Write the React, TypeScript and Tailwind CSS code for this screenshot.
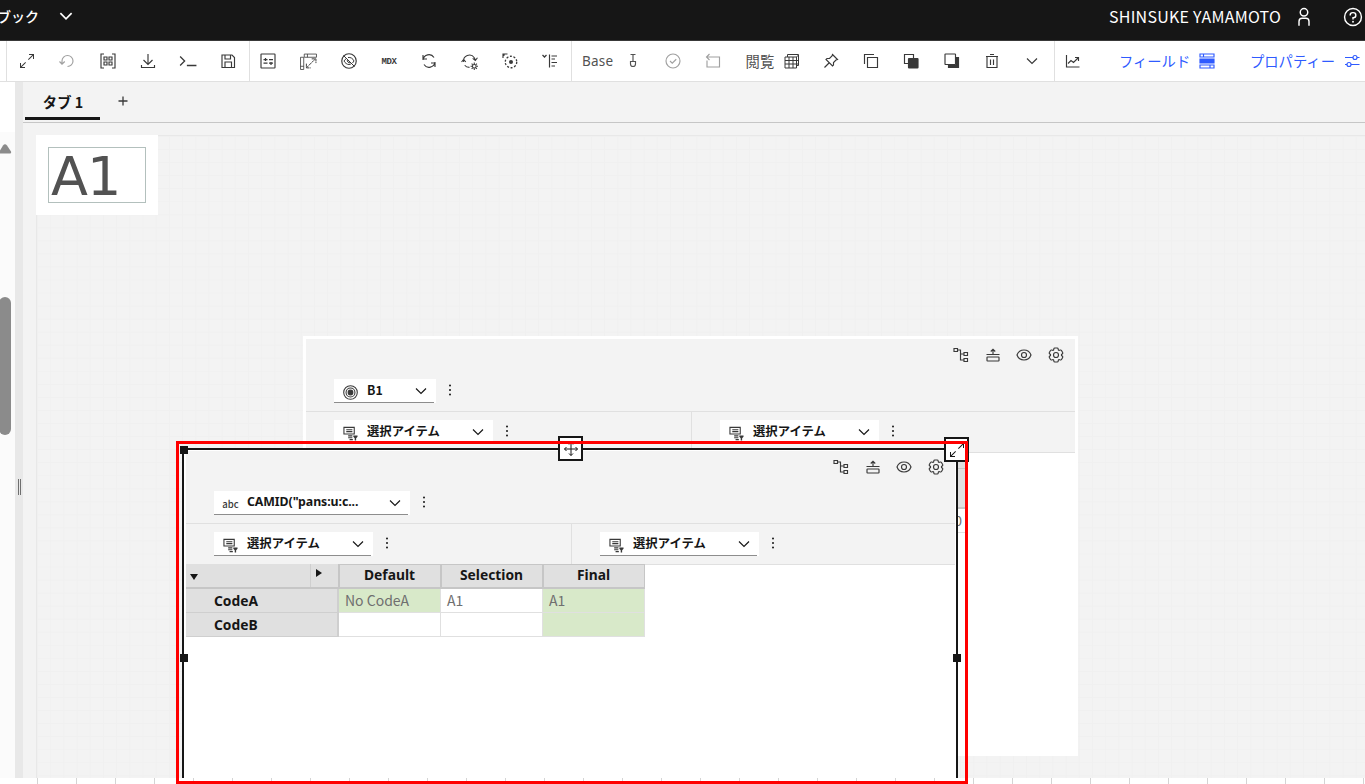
import type { ReactNode } from 'react';
import clsx from 'clsx';

type IconProps = { children: ReactNode; className?: string; size?: number };

function Icon({ children, className, size = 16 }: IconProps) {
  return (
    <svg
      width={size}
      height={size}
      viewBox="0 0 32 32"
      fill="none"
      stroke="currentColor"
      strokeWidth={2.3}
      className={clsx('shrink-0', className)}
    >
      {children}
    </svg>
  );
}

const ChevronDown = ({ className, size = 16 }: { className?: string; size?: number }) => (
  <Icon size={size} className={className}>
    <path d="M6 11l10 10 10-10" strokeWidth="2.300" />
  </Icon>
);

const Maximize = ({ className }: { className?: string }) => (
  <Icon className={className}>
    <path
      fill="currentColor"
      stroke="none"
      d="M20 2v2h6.586L18 12.582 19.414 14 28 5.414V12h2V2zM14 19.416L12.592 18 4 26.586V20H2v10h10v-2H5.414z"
    />
  </Icon>
);

const Dots = () => (
  <Icon className="text-[#161616]">
    <g fill="currentColor" stroke="none">
      <circle cx="16" cy="7" r="2" />
      <circle cx="16" cy="16" r="2" />
      <circle cx="16" cy="25" r="2" />
    </g>
  </Icon>
);

const Hierarchy = () => (
  <Icon>
    <path d="M2 3h7v6H2zM9 6h6v20h7M15 14h7M22 11h7v6h-7zM22 23h7v6h-7z" />
  </Icon>
);

const PushUp = () => (
  <Icon>
    <path d="M3 15h26M16 15V5M11.500 9L16 4.500 20.500 9M5 20h22a1 1 0 0 1 1 1v6a1 1 0 0 1-1 1H5a1 1 0 0 1-1-1v-6a1 1 0 0 1 1-1z" />
  </Icon>
);

const Eye = () => (
  <Icon>
    <path d="M2 16C4.100 10.400 10 6 16 6s11.900 4.400 14 10c-2.100 5.600-8 10-14 10S4.100 21.600 2 16z" />
    <circle cx="16" cy="16" r="5" />
  </Icon>
);

const Gear = () => (
  <Icon>
    <path d="M27 16.760v-1.530l1.920-1.680A2 2 0 0 0 29.300 11L26.940 7a2 2 0 0 0-2.370-.9l-2.430.82a11.350 11.350 0 0 0-1.310-.75l-.51-2.520a2 2 0 0 0-2-1.610h-4.680a2 2 0 0 0-2 1.610l-.51 2.520a11.480 11.480 0 0 0-1.320.75L7.430 6.060A2 2 0 0 0 5.060 7L2.700 11a2 2 0 0 0 .41 2.510L5 15.240v1.530l-1.890 1.680A2 2 0 0 0 2.700 21l2.360 4a2 2 0 0 0 2.370.9l2.430-.82a11.350 11.350 0 0 0 1.310.75l.51 2.520a2 2 0 0 0 2 1.610h4.720a2 2 0 0 0 2-1.610l.51-2.520a11.480 11.480 0 0 0 1.320-.75l2.420.82a2 2 0 0 0 2.370-.9l2.280-4a2 2 0 0 0-.41-2.510z" />
    <circle cx="16" cy="16" r="5" />
  </Icon>
);

const SetIcon = () => (
  <Icon size={15}>
    <path d="M2 3h22v14H2zM7 8h13M7 12h13M11 21h9M11 25h9M14 29h7" />
    <path fill="currentColor" stroke="none" d="M22 20h9v3l-3 3v5h-3v-5l-3-3z" />
  </Icon>
);

const Target = () => (
  <Icon size={15}>
    <circle cx="16" cy="16" r="14.500" />
    <circle cx="16" cy="16" r="9.500" />
    <circle cx="16" cy="16" r="5" fill="currentColor" />
  </Icon>
);

const fileTools: { icon: ReactNode; muted?: boolean }[] = [
  { icon: <Maximize /> },
  {
    muted: true,
    icon: (
      <Icon>
        <path d="M17 27a11 11 0 1 0-11-11v5M1 17l5 5.500 5.500-5.500" />
      </Icon>
    ),
  },
  {
    icon: (
      <Icon>
        <path d="M8 2H2v28h6M24 2h6v28h-6M8 8h6v6H8zM18 8h6v6h-6zM8 18h6v6H8zM18 18h6v6h-6z" />
      </Icon>
    ),
  },
  {
    icon: (
      <Icon>
        <path d="M16 2v21M7 14l9 9 9-9M3 24v5h26v-5" />
      </Icon>
    ),
  },
  {
    icon: (
      <Icon size={18}>
        <path d="M2 8l8 8-8 8M14 24h17" />
      </Icon>
    ),
  },
  {
    icon: (
      <Icon className="-ml-px">
        <path d="M4 4h20l5 5v20H4zM10 4v8h11V4M10 28V18h13v10" />
      </Icon>
    ),
  },
];

const viewTools: ReactNode[] = [
  <Icon>
    <rect x="2" y="2" width="28" height="28" rx="1" />
    <path strokeWidth="2.500" d="M7 13h8M11 10v6M7 20h8M18 13h8M18 20h8M22 18v6" />
  </Icon>,
  <Icon size={17}>
    <path d="M8 2h23v6H8zM1 8h6v23H1zM14 2v6M1 25h6" strokeWidth="1.500" />
    <path d="M12 28L29 11M22 11h8v8M12 20v8h8" strokeWidth="1.800" strokeDasharray="6 1" />
  </Icon>,
  <Icon>
    <circle cx="16" cy="16" r="14.500" />
    <path d="M5 5l22 22M11 11c-2 1-4 3-5 5 2 4 6 7 10 7 2 0 4-1 5-2M14 9c5-1 10 2 12 7l-3 4M13 13a4.500 4.500 0 0 0 6 6" strokeWidth="2" />
  </Icon>,
  <span className="pt-[3px] font-['Liberation_Mono'] text-[9px] font-bold tracking-[-0.3px]">MDX</span>,
  <Icon>
    <path d="M4 14a12 12 0 0 1 22-5M28 18a12 12 0 0 1-22 5M4 4v8h8M28 28v-8h-8" />
  </Icon>,
  <Icon size={17}>
    <path d="M5 17A11 11 0 0 1 25 9l2 4M7 23c2 3 5 4 9 4M1 17l4-5 4 5M22 10l5 4 4-5" strokeWidth="2" />
    <circle cx="25" cy="25" r="3.500" strokeWidth="2" />
    <path d="M25 18v3M25 29v3M18 25h3M29 25h3M20 20l2 2M28 28l2 2M20 30l2-2M28 22l2-2" strokeWidth="2" />
  </Icon>,
  <Icon>
    <path d="M2 10V2h9M2 2l3 3" />
    <circle cx="18" cy="18" r="11.500" strokeWidth="2.600" strokeDasharray="4 3.220" />
    <circle cx="18" cy="18" r="4" fill="currentColor" stroke="none" />
  </Icon>,
  <Icon>
    <path d="M1 4l4 4 4-4" strokeWidth="2.500" />
    <path d="M15 3v26M19 6h11M19 12h7M19 19h11M19 26h7" />
  </Icon>,
];

const arrangeTools: ReactNode[] = [
  <Icon>
    <path d="M19 3l10 10-3 1-5 5v5l-2 2L6 13l2-2h5l5-5zM12 20l-9 9" />
  </Icon>,
  <Icon>
    <path d="M9 9h20v20H9zM3 22V3h19" />
  </Icon>,
  <Icon>
    <path d="M11 21H3V3h18v8" />
    <rect x="11" y="11" width="19" height="19" rx="1" fill="currentColor" />
  </Icon>,
  <Icon>
    <path d="M24 9h5v20H9v-5h15z" fill="currentColor" />
    <rect x="2" y="2" width="21" height="21" rx="1" fill="white" />
  </Icon>,
  <Icon>
    <path d="M4 7h24M6 7v22h20V7M12 3h8M13 13v11M19 13v11" />
  </Icon>,
  <ChevronDown />,
];

function ToolButton({ children, muted }: { children: ReactNode; muted?: boolean }) {
  return (
    <button className={clsx('flex h-full w-[40.3px] shrink-0 items-center justify-center', muted && 'text-[#a0a0a0]')}>
      {children}
    </button>
  );
}

function Header() {
  return (
    <header className="flex h-[41px] items-start border-b border-[#393939] bg-[#161616] text-white">
      <div className="flex h-8 w-[39px] items-center justify-end text-[14px] font-medium whitespace-nowrap">ブック</div>
      <ChevronDown size={18} className="mt-[7px] ml-[18px] [&>path]:stroke-[3]" />
      <div className="ml-auto flex h-[33px] items-center">
        <span className="w-[172px] pb-[2px] text-[16px] tracking-[0.24px] whitespace-nowrap">SHINSUKE YAMAMOTO</span>
        <Icon size={20} className="ml-[13px]">
          <path d="M8 30v-7a5 5 0 0 1 5-5h6a5 5 0 0 1 5 5v7" />
          <circle cx="16" cy="8.500" r="6" />
        </Icon>
        <Icon size={20} className="mr-[2px] ml-[29px]">
          <circle cx="16" cy="16" r="13.500" />
          <path d="M11.500 13.500V13a4 4 0 0 1 4-4h1a4 4 0 0 1 0 8H16v3" />
          <circle cx="16" cy="23.500" r="1.500" fill="currentColor" stroke="none" />
        </Icon>
      </div>
    </header>
  );
}

function Toolbar() {
  return (
    <div className="flex h-[41px] items-center border-b border-[#e0e0e0] bg-white text-[14px] text-[#393939]">
      <div className="ml-[6px] flex h-full w-[244px] border-x border-[#e0e0e0]">
        {fileTools.map((t, i) => (
          <ToolButton key={i} muted={t.muted}>{t.icon}</ToolButton>
        ))}
      </div>
      <div className="flex h-full w-[322px] border-r border-[#e0e0e0]">
        <div className="-ml-[2px] flex">
          {viewTools.map((icon, i) => (
            <ToolButton key={i}>{icon}</ToolButton>
          ))}
        </div>
      </div>
      <div className="flex h-full items-center text-[#525252]">
        <span className="ml-[10px] w-[32px] font-['Noto_Sans'] text-[13.500px] tracking-[0.25px]">Base</span>
        <Icon className="ml-[11px]">
          <path d="M11 3h10M16 3v14M11 17h10v5a5 5 0 0 1-10 0z" />
        </Icon>
        <div className="ml-[12px] flex h-full text-[#a0a0a0]">
          <ToolButton>
            <Icon>
              <circle cx="16" cy="16" r="14" />
              <path d="M10 16l4.500 4.500 8-8" />
            </Icon>
          </ToolButton>
          <ToolButton>
            <Icon>
              <path d="M4 15v13h25V8H4M9 2L3 8l6 6" />
            </Icon>
          </ToolButton>
        </div>
        <span className="ml-[12px] w-[29px] text-[14.300px] whitespace-nowrap">閲覧</span>
        <Icon className="ml-[9px] text-[#393939]">
          <path d="M2 8h23v22H2zM7 8V3h22v22h-4M2 15h27M2 22h27M10 8v22M18 8v22M25 8l4-4" strokeWidth="2" />
        </Icon>
      </div>
      <div className="ml-[11px] flex h-full w-[244px] border-r border-[#e0e0e0]">
        {arrangeTools.map((icon, i) => (
          <ToolButton key={i}>{icon}</ToolButton>
        ))}
      </div>
      <Icon className="ml-[10px]">
        <path d="M3 4v24h26M6 21l6-6 5 4 9-9M20 9h7v7" />
      </Icon>
      <div className="ml-auto flex items-center text-[#2f5bff]">
        <span className="w-[72px] text-[14.300px] whitespace-nowrap">フィールド</span>
        <Icon className="ml-[8px]">
          <path d="M2 2h28v6H2zM2 24h28v6H2zM9 2v6M22 24v6" />
          <path d="M2 12h28v8H2z" fill="currentColor" />
        </Icon>
        <span className="ml-[35px] w-[85px] text-[14.300px] whitespace-nowrap">プロパティー</span>
        <Icon className="mr-[5px] ml-[9px]">
          <path d="M2 9h16M26 9h5M2 23h4M14 23h17" />
          <circle cx="22" cy="9" r="4" />
          <circle cx="10" cy="23" r="4" />
        </Icon>
      </div>
    </div>
  );
}

function SidePanel() {
  return (
    <aside className="flex w-[23px] shrink-0">
      <div className="w-[15px] bg-[#fbfbfb]">
        <div className="h-[50px] bg-white" />
        <svg width="12" height="10" viewBox="0 0 12 10" className="mt-[12px]">
          <path d="M0 6.500L3 1.500Q5 -1 7 1.500L11 7.500Q11.500 9.500 10 9.500H0z" fill="#8b8b8b" />
        </svg>
        <div className="mt-[143px] -ml-px h-[138px] w-[12px] rounded-[6px] bg-[#8b8b8b]" />
      </div>
      <div className="flex w-[8px] items-center justify-center gap-px bg-[#e8e8e8] pt-[114px]">
        <div className="h-[16px] w-px bg-[#6f6f6f]" />
        <div className="h-[16px] w-px bg-[#6f6f6f]" />
      </div>
    </aside>
  );
}

function TabBar() {
  return (
    <div className="flex h-[41px] items-start border-b border-[#c6c6c6] pl-[2px]">
      <div className="flex h-[38px] w-[75px] items-center justify-center border-b-[3px] border-[#161616] pt-[4px] pl-px text-[14.300px] font-bold text-[#161616]">
        タブ 1
      </div>
      <Icon size={18} className="mt-[10px] ml-[14px] text-[#393939]">
        <path d="M16 8v16M8 16h16" />
      </Icon>
    </div>
  );
}

function DimSelect({ icon, label, width, latin }: { icon: ReactNode; label: string; width: string; latin?: boolean }) {
  return (
    <div className="flex items-center">
      <div className={clsx('flex h-[24px] flex-col bg-white', width)}>
        <div className="flex h-[23px] items-center pr-[7px] pl-[9px]">
          <span className="mt-[3px] flex w-[15px] justify-center text-[#393939]">{icon}</span>
          <span
            className={clsx(
              'ml-[9px] text-[12.350px] font-bold whitespace-nowrap text-[#161616]',
              latin ? "font-['Noto_Sans',sans-serif] tracking-[-0.08px]" : 'pb-px',
            )}
          >
            {label}
          </span>
          <ChevronDown className="ml-auto text-[#161616]" />
        </div>
        <div className="mr-[2px] h-px bg-[#8d8d8d]" />
      </div>
      <span className="mb-[2px] ml-[6px]">
        <Dots />
      </span>
    </div>
  );
}

function WidgetHeader({ top }: { top: ReactNode }) {
  return (
    <div className="bg-[#f3f3f3]">
      <div className="h-[73px] border-b border-[#e0e0e0]">
        <div className="flex h-[34px] items-center justify-end gap-[15.700px] pr-[11px] pb-[2px] text-[#393939]">
          <Hierarchy />
          <PushUp />
          <Eye />
          <Gear />
        </div>
        <div className="mt-[6px] ml-[28px]">{top}</div>
      </div>
      <div className="grid h-[41px] grid-cols-[386px_1fr] border-b border-[#e0e0e0]">
        <div className="border-r border-[#e0e0e0] pt-[8px] pl-[28px]">
          <DimSelect icon={<SetIcon />} label="選択アイテム" width="w-[159px]" />
        </div>
        <div className="pt-[8px] pl-[28px]">
          <DimSelect icon={<SetIcon />} label="選択アイテム" width="w-[159px]" />
        </div>
      </div>
    </div>
  );
}

const cols = ['Default', 'Selection', 'Final'];
const rows = [
  { name: 'CodeA', cells: ['No CodeA', 'A1', 'A1'], green: [true, false, true] },
  { name: 'CodeB', cells: ['', '', ''], green: [false, false, true] },
];

function DataGrid() {
  return (
    <div className="w-[459px] text-[14px]">
      <div className="flex h-[25px] border-b-2 border-[#c6c6c6] bg-[#e0e0e0] font-bold text-[#161616]">
        <div className="flex w-[124px] items-center pt-[3px] pl-[4px]">
          <svg width="8" height="6" viewBox="0 0 8 6">
            <path d="M0 0h8L4 6z" fill="#161616" />
          </svg>
        </div>
        <div className="w-[28px] border-l border-[#cfcfcf] pt-[5px] pl-[5px]">
          <svg width="6" height="8" viewBox="0 0 6 8">
            <path d="M0 0v8l6-4z" fill="#161616" />
          </svg>
        </div>
        {cols.map((c) => (
          <div
            key={c}
            className="flex w-[102px] items-center justify-center border-t border-l-2 border-[#c6c6c6] pr-px pb-px font-['Noto_Sans'] text-[13.800px]"
          >
            {c}
          </div>
        ))}
        <div className="w-px bg-[#c6c6c6]" />
      </div>
      {rows.map((r) => (
        <div key={r.name} className="flex h-[24px]">
          <div className="flex w-[153px] items-center border-r-2 border-b border-[#cfcfcf] bg-[#e0e0e0] pt-[2px] pl-[28px] font-['Noto_Sans'] text-[13.800px] font-bold text-[#161616]">
            {r.name}
          </div>
          {r.cells.map((v, i) => (
            <div
              key={i}
              className={clsx(
                'flex w-[102px] items-center border-r border-b border-[#e0e0e0] pl-[6px] text-[#6f6f6f]',
                r.green[i] ? 'bg-[#d8e9c9]' : 'bg-white',
              )}
            >
              {v}
            </div>
          ))}
        </div>
      ))}
    </div>
  );
}

const Handle = ({ className }: { className: string }) => (
  <div className={clsx('absolute h-[8px] w-[8px] bg-[#161616]', className)} />
);

function Canvas() {
  return (
    <div className="relative mt-[12px] ml-[13px] flex-1 overflow-visible border-t border-l border-[#e8e8e8] bg-[linear-gradient(to_right,#f0f0f0_1px,transparent_1px),linear-gradient(to_bottom,#f0f0f0_1px,transparent_1px)] bg-[size:13.200px_13.050px]">
      {/* A1 */}
      <div className="absolute -top-px -left-px h-[80px] w-[122px] bg-white p-[12px]">
        <div className="flex h-[56px] w-[98px] items-center border border-[#b3c0bd] pt-[4px] pl-[2px] font-['DejaVu_Sans'] text-[54px] leading-none tracking-[-1px] text-[#525252]">
          A1
        </div>
      </div>

      {/* B1 */}
      <div className="absolute top-[200px] left-[266px] h-[420px] w-[775px] border-3 border-white bg-white">
        <WidgetHeader top={<DimSelect icon={<Target />} label="B1" width="w-[102px]" />} />
        <div className="absolute top-[123px] left-[600px] w-[60px] text-[14px] text-[#6f6f6f]">
          <div className="h-[7px] border-b border-[#c6c6c6] bg-[#e0e0e0]" />
          <div className="h-[40px] border-b-2 border-[#c6c6c6] bg-[#e0e0e0]" />
          <div className="flex h-[24px] items-center justify-end border-b border-[#e0e0e0] pr-[4px]">0</div>
        </div>
      </div>

      {/* selected view */}
      <div className="absolute top-[312px] left-[145px] h-[330px] w-[776px] border-x-2 border-t-2 border-[#161616] bg-white">
        <div className="ml-[2px] w-[769px] pt-px">
          <WidgetHeader
            top={<DimSelect icon={<span className="text-[9.500px] font-medium">abc</span>} label={'CAMID("pans:u:c...'} width="w-[196px]" latin />}
          />
          <div className="-mt-px">
            <DataGrid />
          </div>
        </div>
        <Handle className="-top-[4px] -left-[4px]" />
        <Handle className="top-[204px] -left-[4px]" />
        <Handle className="top-[204px] -right-[5px]" />
        <div className="absolute -top-[14px] left-[374px] flex h-[25px] w-[25px] items-center justify-center border-2 border-[#161616] bg-white text-[#161616]">
          <Icon>
            <path d="M16 3v26M3 16h26M12 7l4-4 4 4M12 25l4 4 4-4M7 12l-4 4 4 4M25 12l4 4-4 4" strokeWidth="2" />
          </Icon>
        </div>
        <div className="absolute -top-[13px] -right-[13px] flex h-[25px] w-[25px] items-center justify-center border-2 border-[#161616] bg-white text-[#161616]">
          <Maximize />
        </div>
      </div>
    </div>
  );
}

export default function App() {
  return (
    <div className="relative flex h-[784px] w-[1365px] flex-col overflow-hidden bg-[#f3f3f3] font-['Noto_Sans_CJK_JP',sans-serif]">
      <Header />
      <Toolbar />
      <div className="flex min-h-0 flex-1">
        <SidePanel />
        <main className="flex min-w-0 flex-1 flex-col">
          <TabBar />
          <Canvas />
        </main>
      </div>
      {/* ruler */}
      <div className="flex h-[6px] bg-white pl-[37px]">
        {Array.from({ length: 35 }, (_, i) => (
          <div key={i} className="h-full w-[39px] shrink-0 border-l border-[#d4d4d4]" />
        ))}
      </div>
      <div className="absolute top-[441px] left-[176px] h-[343px] w-[792px] border-3 border-[#ff0000]" />
    </div>
  );
}
